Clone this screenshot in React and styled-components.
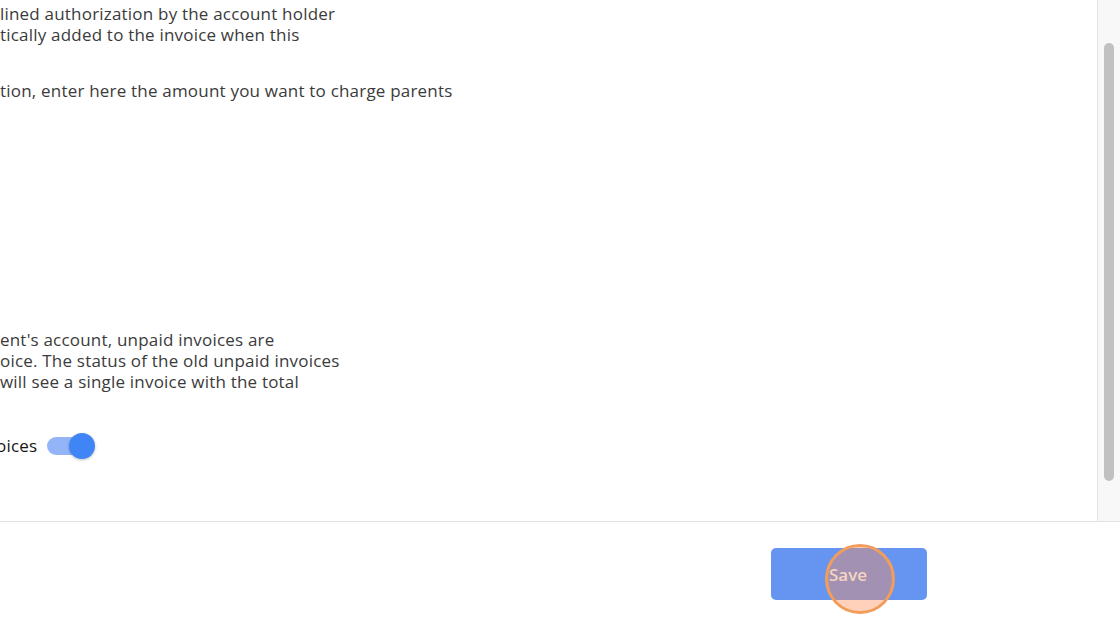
import React from 'react';
import styled, { createGlobalStyle } from 'styled-components';

const GlobalStyle = createGlobalStyle`
  html, body {
    margin: 0;
    padding: 0;
    background: #fff;
    font-family: 'Open Sans', 'Lato', sans-serif;
  }
`;

const Page = styled.div`
  width: 1120px;
  height: 626px;
  display: flex;
  flex-direction: column;
  overflow: hidden;
`;

const Main = styled.div`
  flex: 1;
  display: flex;
  min-height: 0;
`;

const Content = styled.div`
  flex: 1;
  overflow: hidden;
  padding-top: 3px;
`;

const Paragraph = styled.p`
  margin: 0 0 ${props => props.gap || 0}px;
  font-size: 17px;
  letter-spacing: 0.2px;
  line-height: 21px;
  color: #3b3b3b;
  white-space: pre;
`;

const ToggleRow = styled.div`
  display: flex;
  align-items: center;
  gap: 10px;
  margin-top: 42px;
`;

const ToggleLabel = styled.span`
  margin-left: -4px;
  font-size: 17px;
  letter-spacing: 0.2px;
  color: #151515;
`;

const Track = styled.div`
  position: relative;
  width: 46px;
  height: 18px;
  border-radius: 9px;
  background: #93b5f7;
`;

const Knob = styled.div`
  position: absolute;
  right: -2px;
  top: -4px;
  width: 26px;
  height: 26px;
  border-radius: 50%;
  background: #3f85f6;
  box-shadow: 0 1px 3px rgba(0, 0, 0, 0.25);
`;

const ScrollTrack = styled.div`
  width: 23px;
  background: #f8f8f8;
  border-left: 1px solid #e4e4e4;
  padding: 43px 6px 40px 6px;
  box-sizing: border-box;
  display: flex;
`;

const Thumb = styled.div`
  flex: 1;
  border-radius: 6px;
  background: #c1c1c1;
`;

const Footer = styled.div`
  height: 105px;
  border-top: 1px solid #e2e2e2;
  display: flex;
  justify-content: flex-end;
  align-items: flex-start;
  padding: 26px 193px 0 0;
  box-sizing: border-box;
`;

const SaveButton = styled.button`
  position: relative;
  width: 156px;
  height: 52px;
  border: none;
  border-radius: 5px;
  background: #6595f0;
  color: #fff;
  font-family: 'Open Sans', 'Lato', sans-serif;
  font-size: 17px;
  font-weight: 600;
  cursor: pointer;
  overflow: visible;
`;

const ClickMarker = styled.span`
  position: absolute;
  left: 54px;
  top: -4px;
  width: 64px;
  height: 64px;
  border-radius: 50%;
  border: 3px solid #f39d5c;
  background: rgba(255, 140, 85, 0.4);
  pointer-events: none;
`;

const ButtonText = styled.span`
  position: relative;
  color: #f6d5c0;
  margin-right: 2px;
`;

export default function App() {
  return (
    <>
      <GlobalStyle />
      <Page>
        <Main>
          <Content>
            <Paragraph>lined authorization by the account holder</Paragraph>
            <Paragraph gap={35}>tically added to the invoice when this</Paragraph>
            <Paragraph gap={228}>tion, enter here the amount you want to charge parents</Paragraph>
            <Paragraph>ent's account, unpaid invoices are</Paragraph>
            <Paragraph>oice. The status of the old unpaid invoices</Paragraph>
            <Paragraph>will see a single invoice with the total</Paragraph>
            <ToggleRow>
              <ToggleLabel>oices</ToggleLabel>
              <Track>
                <Knob />
              </Track>
            </ToggleRow>
          </Content>
          <ScrollTrack>
            <Thumb />
          </ScrollTrack>
        </Main>
        <Footer>
          <SaveButton>
            <ClickMarker />
            <ButtonText>Save</ButtonText>
          </SaveButton>
        </Footer>
      </Page>
    </>
  );
}
